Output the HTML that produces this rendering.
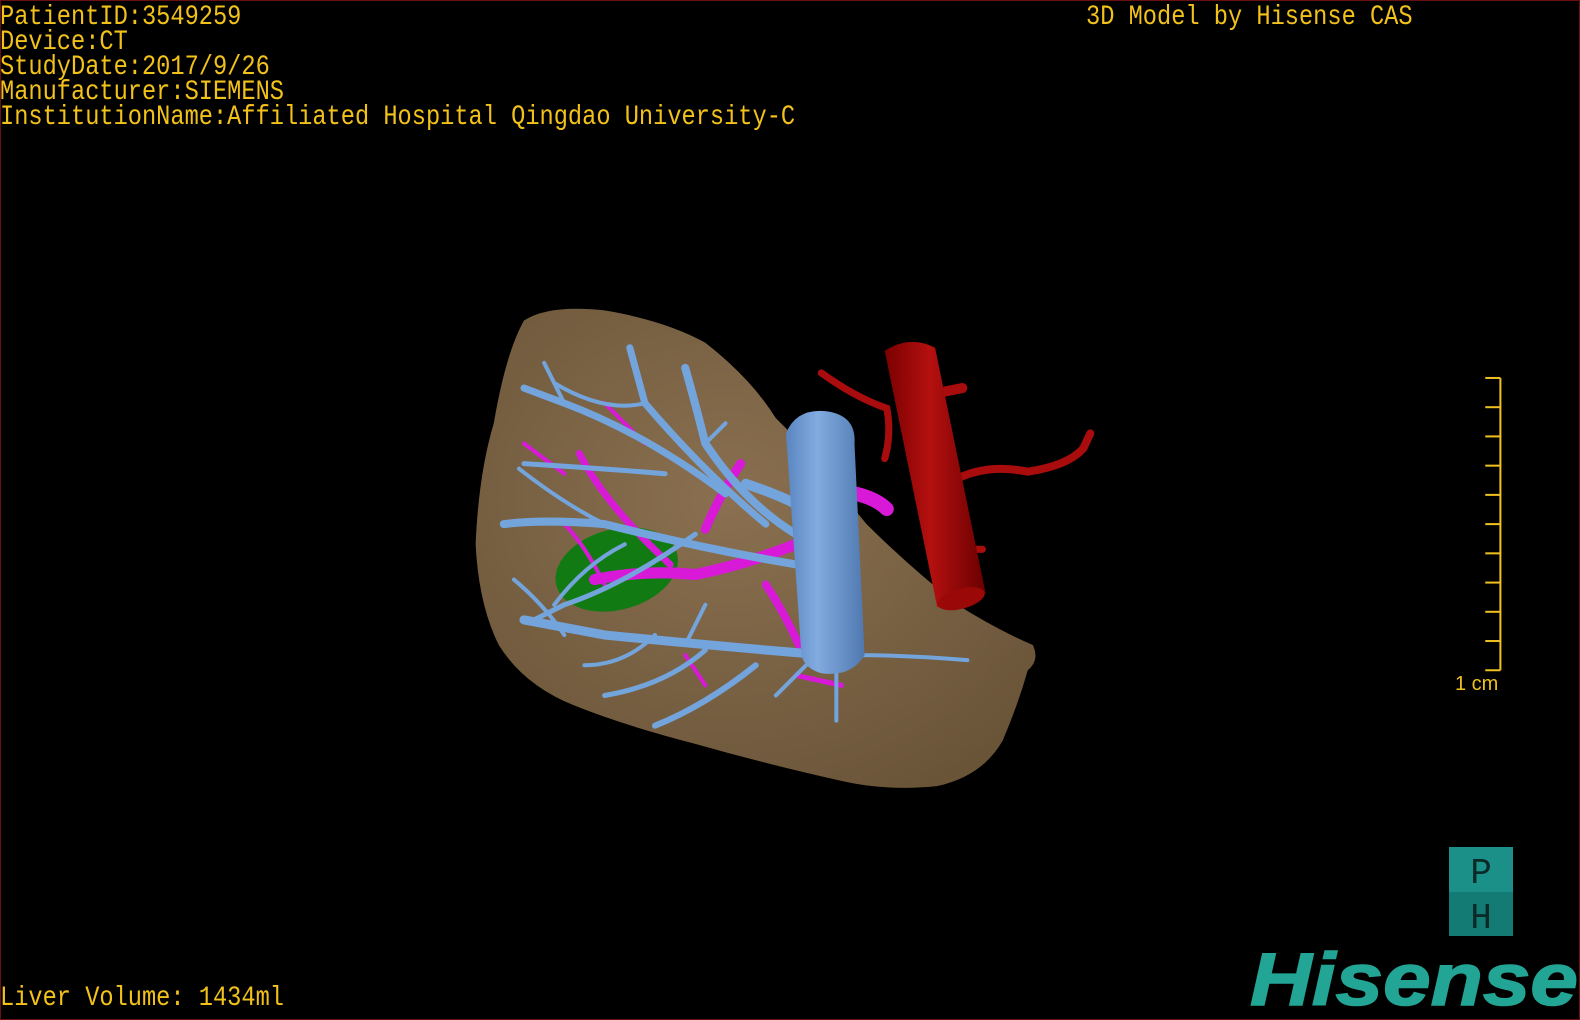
<!DOCTYPE html>
<html><head><meta charset="utf-8"><style>
html,body{margin:0;padding:0;background:#000;}
body{width:1580px;height:1020px;position:relative;overflow:hidden;}
.frame{position:absolute;left:0;top:0;width:1578px;height:1018px;border:1px solid #6a1010;}
.t{position:absolute;font-family:"Liberation Mono",monospace;font-size:28px;line-height:25px;color:#f2c21a;white-space:pre;transform:scaleX(0.845);transform-origin:0 0;}
svg{position:absolute;left:0;top:0;}
</style></head><body>
<svg width="1580" height="1020" viewBox="0 0 1568 1012" preserveAspectRatio="none">
<defs>
<radialGradient id="lg" cx="0.45" cy="0.4" r="0.7"><stop offset="0" stop-color="#8a7050"/><stop offset="1" stop-color="#6a5438"/></radialGradient>
<linearGradient id="ivc" x1="0" x2="1"><stop offset="0" stop-color="#5a85c0"/><stop offset="0.4" stop-color="#82ace0"/><stop offset="1" stop-color="#4f78b0"/></linearGradient>
<linearGradient id="ao" x1="0" x2="1"><stop offset="0" stop-color="#7a0000"/><stop offset="0.45" stop-color="#b51010"/><stop offset="1" stop-color="#6a0000"/></linearGradient>
</defs>
<g fill="none" stroke="#a80c0c" stroke-linecap="round">
<path d="M815 370 Q850 395 880 405 Q885 430 878 455" stroke-width="7"/>
<path d="M950 475 Q980 460 1020 468 Q1060 462 1075 445 L1082 430" stroke-width="8"/>
<path d="M930 390 L955 385" stroke-width="10"/>
<path d="M945 545 L975 545" stroke-width="7"/>
<path d="M765 425 Q770 445 785 455" stroke-width="3"/>
</g>
<path d="M520 318 Q545 302 600 308 Q660 318 700 340 Q745 375 770 415 L787 432 L860 520 Q900 560 950 600 Q990 625 1025 640 Q1032 655 1020 665 Q1010 700 995 735 Q975 770 930 780 Q880 785 836 775 Q760 758 690 738 Q620 720 570 700 Q520 680 495 640 Q475 600 472 540 Q475 470 490 420 Q502 350 520 318 Z" fill="url(#lg)"/>
<path d="M878 348 Q903 332 928 345 L978 588 Q958 612 930 602 Z" fill="url(#ao)"/>
<ellipse cx="954" cy="594" rx="24" ry="10" fill="#9a0808" transform="rotate(-15 954 594)"/>
<ellipse cx="612" cy="565" rx="62" ry="40" fill="#127a12" transform="rotate(-15 612 565)"/>
<g fill="none" stroke="#d81ad8" stroke-linecap="round">
<path d="M575 450 Q600 500 665 560" stroke-width="7"/>
<path d="M735 460 Q715 490 700 525" stroke-width="9"/>
<path d="M590 575 Q640 565 690 570 Q740 560 790 540" stroke-width="11"/>
<path d="M760 580 Q780 610 795 645" stroke-width="8"/>
<path d="M520 440 L560 470" stroke-width="4"/>
<path d="M600 400 L640 440" stroke-width="4"/>
<path d="M560 520 Q580 540 600 580" stroke-width="4"/>
<path d="M790 670 L835 680" stroke-width="5"/>
<path d="M680 650 L700 680" stroke-width="4"/>
<path d="M850 490 Q870 495 880 505" stroke-width="14"/>
</g>
<g fill="none" stroke="#74a4dc" stroke-linecap="round">
<path d="M790 560 Q700 545 600 520 Q540 515 500 520" stroke-width="8"/>
<path d="M820 650 Q700 640 600 630 L520 615" stroke-width="9"/>
<path d="M790 530 Q740 500 700 440 Q690 400 680 365" stroke-width="8"/>
<path d="M760 520 Q700 470 640 400 L625 345" stroke-width="7"/>
<path d="M720 490 Q640 430 560 400 L520 385" stroke-width="7"/>
<path d="M660 470 Q600 465 520 460" stroke-width="5"/>
<path d="M690 530 Q620 580 560 600 L530 615" stroke-width="5"/>
<path d="M740 480 Q770 490 790 500" stroke-width="10"/>
<path d="M640 400 Q600 410 550 380" stroke-width="4"/>
<path d="M700 440 L720 420" stroke-width="4"/>
<path d="M560 400 L540 360" stroke-width="4"/>
<path d="M750 660 Q700 700 650 720" stroke-width="6"/>
<path d="M700 645 Q660 680 600 690" stroke-width="5"/>
<path d="M800 660 L770 690" stroke-width="4"/>
<path d="M830 660 L830 715" stroke-width="4"/>
<path d="M850 650 Q900 650 960 655" stroke-width="4"/>
<path d="M650 630 Q620 660 580 660" stroke-width="4"/>
<path d="M600 520 Q560 500 515 465" stroke-width="4"/>
<path d="M620 540 Q580 560 550 600" stroke-width="4"/>
<path d="M560 630 Q540 600 510 575" stroke-width="4"/>
<path d="M680 640 L700 600" stroke-width="4"/>
</g>
<path d="M780 430 Q790 405 820 408 Q850 412 848 440 L858 650 Q845 672 815 668 Q795 662 795 645 Z" fill="url(#ivc)"/>
<g stroke="#f0c020" stroke-width="2" fill="none">
<line x1="1489" y1="375" x2="1489" y2="665"/>
<line x1="1474" y1="375" x2="1489" y2="375"/><line x1="1474" y1="404" x2="1489" y2="404"/>
<line x1="1474" y1="433" x2="1489" y2="433"/><line x1="1474" y1="462" x2="1489" y2="462"/>
<line x1="1474" y1="491" x2="1489" y2="491"/><line x1="1474" y1="520" x2="1489" y2="520"/>
<line x1="1474" y1="549" x2="1489" y2="549"/><line x1="1474" y1="578" x2="1489" y2="578"/>
<line x1="1474" y1="607" x2="1489" y2="607"/><line x1="1474" y1="636" x2="1489" y2="636"/>
<line x1="1474" y1="665" x2="1489" y2="665"/>
</g>
</svg>
<svg width="1580" height="1020" viewBox="0 0 1580 1020">
<text x="1455" y="690" font-family="Liberation Sans,sans-serif" font-size="20" fill="#f0c020">1 cm</text>
<rect x="1449" y="847" width="64" height="45" fill="#1a9088"/>
<rect x="1449" y="892" width="64" height="44" fill="#137a74"/>
<text x="1481" y="883" text-anchor="middle" font-family="Liberation Mono,monospace" font-size="36" fill="#0a2a28">P</text>
<text x="1481" y="928" text-anchor="middle" font-family="Liberation Mono,monospace" font-size="36" fill="#0a2a28">H</text>
<text x="1250" y="1005" textLength="328" lengthAdjust="spacingAndGlyphs" font-family="Liberation Sans,sans-serif" font-weight="bold" font-style="italic" font-size="74" fill="#22a595" stroke="#22a595" stroke-width="1.5">Hisense</text>
</svg>
<div class="frame"></div>
<div class="t" style="left:0;top:5px;">PatientID:3549259
Device:CT
StudyDate:2017/9/26
Manufacturer:SIEMENS
InstitutionName:Affiliated Hospital Qingdao University-C</div>
<div class="t" style="left:1086px;top:5px;">3D Model by Hisense CAS</div>
<div class="t" style="left:0;top:986px;">Liver Volume: 1434ml</div>
</body></html>
